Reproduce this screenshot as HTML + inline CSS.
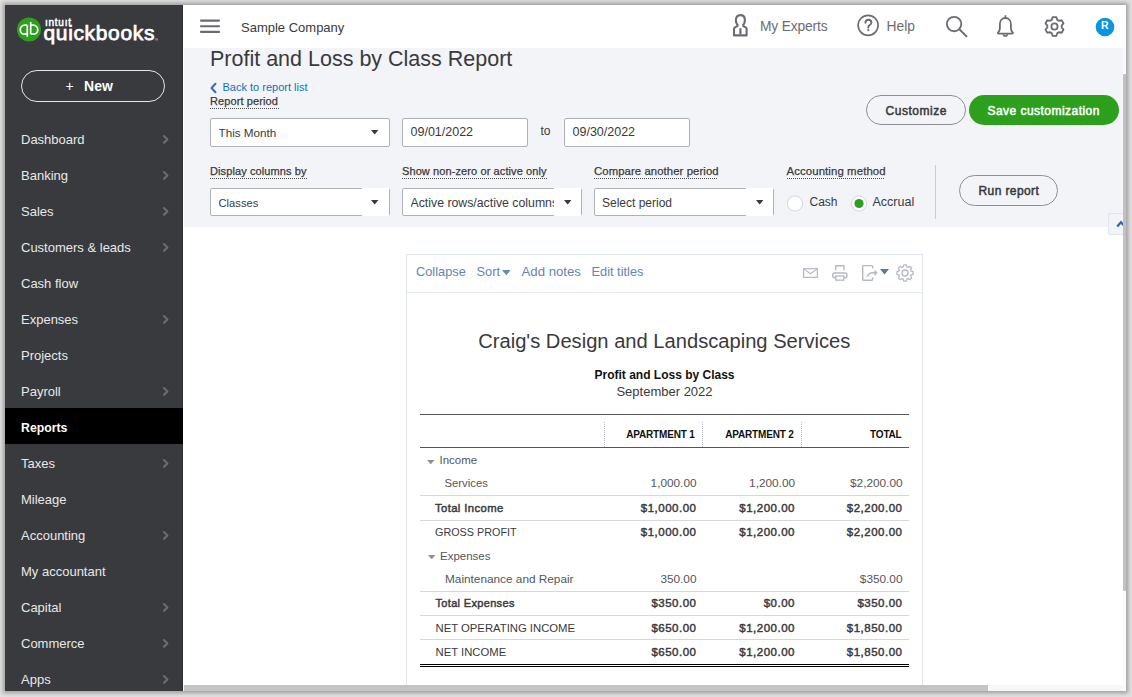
<!DOCTYPE html>
<html><head><meta charset="utf-8">
<style>
*{box-sizing:border-box;margin:0;padding:0}
html,body{width:1132px;height:697px;overflow:hidden;background:#e0e0e0;font-family:"Liberation Sans",sans-serif;position:relative}
.a{position:absolute;white-space:nowrap}
svg.a{overflow:visible}
</style></head><body>

<div class="a" style="left:5px;top:5px;width:1121px;height:686px;background:#fff;box-shadow:0 0 4px 2px rgba(0,0,0,.3)"></div>
<div class="a" style="left:5px;top:5px;width:178px;height:686px;background:#393a3d"></div>
<div class="a" style="left:182px;top:5px;width:1px;height:686px;background:#2f3033"></div>
<svg class="a" style="left:16px;top:17px" width="26" height="25" viewBox="0 0 26 25"><circle cx="13" cy="12.6" r="12" fill="#2ca01c"/><path d="M11.3 8.2H8.7A4.45 4.45 0 0 0 8.7 17.1H11.3M11.3 8.2V19.7M14.7 17.1H17.3A4.45 4.45 0 0 0 17.3 8.2H14.7M14.7 5V17.1" stroke="#fff" stroke-width="1.7" fill="none"/></svg>
<div class="a" style="left:45px;top:17.84px;font-size:10px;line-height:10px;color:#fff;letter-spacing:0.75px;-webkit-text-stroke:0.5px #fff">&#305;ntu&#305;t</div>
<div class="a" style="left:43.5px;top:22.42px;font-size:21px;line-height:21px;color:#fff;letter-spacing:0.65px;-webkit-text-stroke:0.75px #fff">quickbooks</div>
<div class="a" style="left:155px;top:37px;font-size:4px;color:#fff">&reg;</div>
<div class="a" style="left:21px;top:70px;width:144px;height:32px;border:1.3px solid #e6e6e6;border-radius:16px"></div>
<div class="a" style="left:65.5px;top:79.15px;font-size:14px;line-height:14px;color:#fff;">+</div>
<div class="a" style="left:84px;top:79.15px;font-size:14px;line-height:14px;color:#fff;font-weight:bold;letter-spacing:0.1px">New</div>
<div class="a" style="left:21px;top:133.00px;font-size:13px;line-height:13px;color:#e8e8e8;">Dashboard</div>
<svg class="a" style="left:161.5px;top:134px" width="7" height="11" viewBox="0 0 7 11"><path d="M2 2L5.4 5.4L2 8.8" stroke="#6b6c72" stroke-width="2.1" fill="none" stroke-linecap="round" stroke-linejoin="round"/></svg>
<div class="a" style="left:21px;top:169.00px;font-size:13px;line-height:13px;color:#e8e8e8;">Banking</div>
<svg class="a" style="left:161.5px;top:170px" width="7" height="11" viewBox="0 0 7 11"><path d="M2 2L5.4 5.4L2 8.8" stroke="#6b6c72" stroke-width="2.1" fill="none" stroke-linecap="round" stroke-linejoin="round"/></svg>
<div class="a" style="left:21px;top:205.00px;font-size:13px;line-height:13px;color:#e8e8e8;">Sales</div>
<svg class="a" style="left:161.5px;top:206px" width="7" height="11" viewBox="0 0 7 11"><path d="M2 2L5.4 5.4L2 8.8" stroke="#6b6c72" stroke-width="2.1" fill="none" stroke-linecap="round" stroke-linejoin="round"/></svg>
<div class="a" style="left:21px;top:241.00px;font-size:13px;line-height:13px;color:#e8e8e8;">Customers &amp; leads</div>
<svg class="a" style="left:161.5px;top:242px" width="7" height="11" viewBox="0 0 7 11"><path d="M2 2L5.4 5.4L2 8.8" stroke="#6b6c72" stroke-width="2.1" fill="none" stroke-linecap="round" stroke-linejoin="round"/></svg>
<div class="a" style="left:21px;top:277.00px;font-size:13px;line-height:13px;color:#e8e8e8;">Cash flow</div>
<div class="a" style="left:21px;top:313.00px;font-size:13px;line-height:13px;color:#e8e8e8;">Expenses</div>
<svg class="a" style="left:161.5px;top:314px" width="7" height="11" viewBox="0 0 7 11"><path d="M2 2L5.4 5.4L2 8.8" stroke="#6b6c72" stroke-width="2.1" fill="none" stroke-linecap="round" stroke-linejoin="round"/></svg>
<div class="a" style="left:21px;top:349.00px;font-size:13px;line-height:13px;color:#e8e8e8;">Projects</div>
<div class="a" style="left:21px;top:385.00px;font-size:13px;line-height:13px;color:#e8e8e8;">Payroll</div>
<svg class="a" style="left:161.5px;top:386px" width="7" height="11" viewBox="0 0 7 11"><path d="M2 2L5.4 5.4L2 8.8" stroke="#6b6c72" stroke-width="2.1" fill="none" stroke-linecap="round" stroke-linejoin="round"/></svg>
<div class="a" style="left:5px;top:408px;width:178px;height:36px;background:#000"></div>
<div class="a" style="left:21px;top:421.59px;font-size:12.3px;line-height:12.3px;color:#fff;font-weight:bold;">Reports</div>
<div class="a" style="left:21px;top:457.00px;font-size:13px;line-height:13px;color:#e8e8e8;">Taxes</div>
<svg class="a" style="left:161.5px;top:458px" width="7" height="11" viewBox="0 0 7 11"><path d="M2 2L5.4 5.4L2 8.8" stroke="#6b6c72" stroke-width="2.1" fill="none" stroke-linecap="round" stroke-linejoin="round"/></svg>
<div class="a" style="left:21px;top:493.00px;font-size:13px;line-height:13px;color:#e8e8e8;">Mileage</div>
<div class="a" style="left:21px;top:529.00px;font-size:13px;line-height:13px;color:#e8e8e8;">Accounting</div>
<svg class="a" style="left:161.5px;top:530px" width="7" height="11" viewBox="0 0 7 11"><path d="M2 2L5.4 5.4L2 8.8" stroke="#6b6c72" stroke-width="2.1" fill="none" stroke-linecap="round" stroke-linejoin="round"/></svg>
<div class="a" style="left:21px;top:565.00px;font-size:13px;line-height:13px;color:#e8e8e8;">My accountant</div>
<div class="a" style="left:21px;top:601.00px;font-size:13px;line-height:13px;color:#e8e8e8;">Capital</div>
<svg class="a" style="left:161.5px;top:602px" width="7" height="11" viewBox="0 0 7 11"><path d="M2 2L5.4 5.4L2 8.8" stroke="#6b6c72" stroke-width="2.1" fill="none" stroke-linecap="round" stroke-linejoin="round"/></svg>
<div class="a" style="left:21px;top:637.00px;font-size:13px;line-height:13px;color:#e8e8e8;">Commerce</div>
<svg class="a" style="left:161.5px;top:638px" width="7" height="11" viewBox="0 0 7 11"><path d="M2 2L5.4 5.4L2 8.8" stroke="#6b6c72" stroke-width="2.1" fill="none" stroke-linecap="round" stroke-linejoin="round"/></svg>
<div class="a" style="left:21px;top:673.00px;font-size:13px;line-height:13px;color:#e8e8e8;">Apps</div>
<svg class="a" style="left:161.5px;top:674px" width="7" height="11" viewBox="0 0 7 11"><path d="M2 2L5.4 5.4L2 8.8" stroke="#6b6c72" stroke-width="2.1" fill="none" stroke-linecap="round" stroke-linejoin="round"/></svg>
<div class="a" style="left:183px;top:5px;width:943px;height:43px;background:#fff"></div>
<svg class="a" style="left:200px;top:19px" width="20" height="14" viewBox="0 0 20 14"><path d="M1 1.6h18M1 7.3h18M1 12.9h18" stroke="#6b6c72" stroke-width="2.1" stroke-linecap="round"/></svg>
<div class="a" style="left:241px;top:21.30px;font-size:13px;line-height:13px;color:#393a3d;">Sample Company</div>
<svg class="a" style="left:728px;top:11px" width="24" height="29" viewBox="0 0 24 29"><path d="M10.3 14.6C8.7 13.4 7.9 11.5 7.9 9C7.9 5.8 9.8 4.1 12.4 4.1C15 4.1 16.9 5.8 16.9 9C16.9 11.5 16.1 13.4 14.5 14.6M10.3 14.6L7 16.4C6.3 16.8 6 17.4 6 18.1V24.4H18.6V18.1C18.6 17.4 18.3 16.8 17.6 16.4L14.5 14.6" stroke="#6b6c72" stroke-width="2.1" fill="none" stroke-linejoin="round"/><path d="M12.4 17.2V23.5" stroke="#6b6c72" stroke-width="2.2"/></svg>
<div class="a" style="left:760px;top:19.92px;font-size:13.8px;line-height:13.8px;color:#6b6c72;letter-spacing:-0.15px">My Experts</div>
<svg class="a" style="left:856px;top:14px" width="24" height="23" viewBox="0 0 24 23"><circle cx="12.1" cy="11.3" r="10" stroke="#6b6c72" stroke-width="1.7" fill="none"/></svg>
<svg class="a" style="left:856px;top:14px" width="24" height="23" viewBox="0 0 24 23"><path d="M9.4 8.7C9.6 6.8 10.8 5.8 12.4 5.8C14.1 5.8 15.4 6.9 15.4 8.6C15.4 10.3 13.9 10.9 12.9 11.7C12.4 12.1 12.3 12.6 12.3 13.6" stroke="#6b6c72" stroke-width="1.9" fill="none" stroke-linecap="round"/><circle cx="12.3" cy="16.1" r="1.15" fill="#6b6c72"/></svg>
<div class="a" style="left:886.5px;top:20.32px;font-size:13.8px;line-height:13.8px;color:#6b6c72;">Help</div>
<svg class="a" style="left:944px;top:14px" width="26" height="25" viewBox="0 0 26 25"><circle cx="10.1" cy="10" r="7.2" stroke="#6b6c72" stroke-width="1.85" fill="none"/><path d="M15.5 15.4l7 7" stroke="#6b6c72" stroke-width="2" stroke-linecap="round"/></svg>
<svg class="a" style="left:995px;top:14px" width="22" height="25" viewBox="0 0 22 25"><path d="M10.4 1.2V4" stroke="#6b6c72" stroke-width="1.7"/><path d="M10.4 4C7 4 4.9 6.8 4.9 10V14C4.9 15.8 4.2 17.3 3.2 18.3C2.6 18.9 2.6 19.6 3.6 19.6H17.2C18.2 19.6 18.2 18.9 17.6 18.3C16.6 17.3 15.9 15.8 15.9 14V10C15.9 6.8 13.8 4 10.4 4Z" stroke="#6b6c72" stroke-width="1.8" fill="none" stroke-linejoin="round"/><path d="M8.5 20.2A1.9 1.9 0 0 0 12.3 20.2" stroke="#6b6c72" stroke-width="1.5" fill="none"/></svg>
<svg class="a" style="left:1043px;top:15px" width="23" height="23" viewBox="0 0 23 23"><path d="M8.69 4.87 L9.69 2.17 L13.31 2.17 L14.31 4.87 L15.83 5.75 L18.67 5.27 L20.48 8.41 L18.65 10.62 L18.65 12.38 L20.48 14.59 L18.67 17.73 L15.83 17.25 L14.31 18.13 L13.31 20.83 L9.69 20.83 L8.69 18.13 L7.17 17.25 L4.33 17.73 L2.52 14.59 L4.35 12.38 L4.35 10.62 L2.52 8.41 L4.33 5.27 L7.17 5.75Z" stroke="#6b6c72" stroke-width="1.8" fill="none" stroke-linejoin="round"/><circle cx="11.5" cy="11.5" r="3.1" stroke="#6b6c72" stroke-width="1.8" fill="none"/></svg>
<svg class="a" style="left:1095px;top:17px" width="20" height="20" viewBox="0 0 20 20"><circle cx="10" cy="10" r="9.3" fill="#0d94e0"/></svg>
<div class="a" style="left:1101px;top:20.41px;font-size:10.5px;line-height:10.5px;color:#fff;font-weight:bold;">R</div>
<div class="a" style="left:184px;top:48px;width:939px;height:179px;background:#f3f4f7"></div>
<div class="a" style="left:210px;top:49.00px;font-size:21.5px;line-height:21.5px;color:#393a3d;">Profit and Loss by Class Report</div>
<svg class="a" style="left:209px;top:82px" width="9" height="12" viewBox="0 0 9 12"><path d="M6.5 1.8L2.5 6l4 4.2" stroke="#3c69b6" stroke-width="2" fill="none" stroke-linecap="round" stroke-linejoin="round"/></svg>
<div class="a" style="left:222.5px;top:82.29px;font-size:11px;line-height:11px;color:#0c73c4;">Back to report list</div>
<div class="a" style="left:210px;top:95.59px;font-size:11px;line-height:11px;color:#393a3d;letter-spacing:0.1px;-webkit-text-stroke:0.25px #393a3d">Report period</div>
<div class="a" style="left:210px;top:107.9px;width:69px;height:1px;background-image:linear-gradient(90deg,#393a3d 50%,transparent 50%);background-size:2px 1px;opacity:.9"></div>
<div class="a" style="left:210px;top:118px;width:180px;height:29px;background:#fff;border:1px solid #adb1b8;border-radius:2px"></div>
<div class="a" style="left:218.5px;top:127.40px;font-size:11.7px;line-height:11.7px;color:#393a3d;overflow:hidden">This Month</div>
<svg class="a" style="left:371px;top:130px" width="8" height="5" viewBox="0 0 8 5"><path d="M0 0h7.4L3.7 4.6z" fill="#393a3d"/></svg>
<div class="a" style="left:402px;top:118px;width:126px;height:29px;background:#fff;border:1px solid #adb1b8;border-radius:2px"></div>
<div class="a" style="left:410.5px;top:126.22px;font-size:12.5px;line-height:12.5px;color:#393a3d;overflow:hidden">09/01/2022</div>
<div class="a" style="left:540.5px;top:125.24px;font-size:12px;line-height:12px;color:#393a3d;">to</div>
<div class="a" style="left:564px;top:118px;width:126px;height:29px;background:#fff;border:1px solid #adb1b8;border-radius:2px"></div>
<div class="a" style="left:572.5px;top:126.22px;font-size:12.5px;line-height:12.5px;color:#393a3d;overflow:hidden">09/30/2022</div>
<div class="a" style="left:866px;top:95px;width:100px;height:30px;border:1px solid #8d9096;border-radius:15px"></div>
<div class="a" style="left:885.5px;top:104.84px;font-size:12px;line-height:12px;color:#393a3d;letter-spacing:0.52px;-webkit-text-stroke:0.5px #393a3d">Customize</div>
<div class="a" style="left:969px;top:95px;width:150px;height:30px;background:#2ca01c;border-radius:15px"></div>
<div class="a" style="left:987.5px;top:104.84px;font-size:12px;line-height:12px;color:#fff;letter-spacing:0.46px;-webkit-text-stroke:0.5px #fff">Save customization</div>
<div class="a" style="left:210px;top:165.89px;font-size:11px;line-height:11px;color:#393a3d;letter-spacing:0.1px;-webkit-text-stroke:0.25px #393a3d">Display columns by</div>
<div class="a" style="left:210px;top:178.2px;width:97px;height:1px;background-image:linear-gradient(90deg,#393a3d 50%,transparent 50%);background-size:2px 1px;opacity:.9"></div>
<div class="a" style="left:402px;top:165.89px;font-size:11px;line-height:11px;color:#393a3d;letter-spacing:0.1px;-webkit-text-stroke:0.25px #393a3d">Show non-zero or active only</div>
<div class="a" style="left:402px;top:178.2px;width:145px;height:1px;background-image:linear-gradient(90deg,#393a3d 50%,transparent 50%);background-size:2px 1px;opacity:.9"></div>
<div class="a" style="left:594px;top:165.63px;font-size:11.3px;line-height:11.3px;color:#393a3d;letter-spacing:0.1px;-webkit-text-stroke:0.25px #393a3d">Compare another period</div>
<div class="a" style="left:594px;top:178.2px;width:124px;height:1px;background-image:linear-gradient(90deg,#393a3d 50%,transparent 50%);background-size:2px 1px;opacity:.9"></div>
<div class="a" style="left:786.5px;top:165.55px;font-size:11.4px;line-height:11.4px;color:#393a3d;letter-spacing:0.1px;-webkit-text-stroke:0.25px #393a3d">Accounting method</div>
<div class="a" style="left:786.5px;top:178.2px;width:98.5px;height:1px;background-image:linear-gradient(90deg,#393a3d 50%,transparent 50%);background-size:2px 1px;opacity:.9"></div>
<div class="a" style="left:210px;top:188px;width:180px;height:28px;background:#fff;border:1px solid #adb1b8;border-radius:2px"></div>
<div class="a" style="left:218.5px;top:198.12px;font-size:11.2px;line-height:11.2px;color:#393a3d;overflow:hidden;width:143.5px">Classes</div>
<div class="a" style="left:362px;top:188px;width:27px;height:28px;background:#fff"></div>
<svg class="a" style="left:371px;top:200px" width="8" height="5" viewBox="0 0 8 5"><path d="M0 0h7.4L3.7 4.6z" fill="#393a3d"/></svg>
<div class="a" style="left:402px;top:188px;width:180px;height:28px;background:#fff;border:1px solid #adb1b8;border-radius:2px"></div>
<div class="a" style="left:410.5px;top:197.19px;font-size:12.3px;line-height:12.3px;color:#393a3d;overflow:hidden;width:143.5px">Active rows/active columns</div>
<div class="a" style="left:554px;top:188px;width:27px;height:28px;background:#fff"></div>
<svg class="a" style="left:563.5px;top:200px" width="8" height="5" viewBox="0 0 8 5"><path d="M0 0h7.4L3.7 4.6z" fill="#393a3d"/></svg>
<div class="a" style="left:594px;top:188px;width:180px;height:28px;background:#fff;border:1px solid #adb1b8;border-radius:2px"></div>
<div class="a" style="left:602px;top:197.44px;font-size:12px;line-height:12px;color:#393a3d;overflow:hidden;width:144px">Select period</div>
<div class="a" style="left:746px;top:188px;width:27px;height:28px;background:#fff"></div>
<svg class="a" style="left:755.5px;top:200px" width="8" height="5" viewBox="0 0 8 5"><path d="M0 0h7.4L3.7 4.6z" fill="#393a3d"/></svg>
<svg class="a" style="left:786px;top:194.7px" width="18" height="18" viewBox="0 0 18 18"><circle cx="9" cy="8.5" r="7.6" fill="#fff" stroke="#d4d7dc" stroke-width="1"/></svg>
<div class="a" style="left:809.5px;top:196.24px;font-size:12px;line-height:12px;color:#393a3d;">Cash</div>
<svg class="a" style="left:850px;top:194.7px" width="18" height="18" viewBox="0 0 18 18"><circle cx="9" cy="8.5" r="7.6" fill="#fff" stroke="#d4d7dc" stroke-width="1"/><circle cx="9" cy="8.5" r="4.6" fill="#2ca01c"/></svg>
<div class="a" style="left:872.5px;top:195.82px;font-size:12.5px;line-height:12.5px;color:#393a3d;">Accrual</div>
<div class="a" style="left:935px;top:165px;width:1px;height:54px;background:#c9ccd1"></div>
<div class="a" style="left:959px;top:175px;width:99px;height:31px;border:1px solid #8d9096;border-radius:15.5px"></div>
<div class="a" style="left:978.5px;top:184.74px;font-size:12px;line-height:12px;color:#393a3d;letter-spacing:0.4px;-webkit-text-stroke:0.5px #393a3d">Run report</div>
<div class="a" style="left:1108px;top:213px;width:18px;height:22px;border:1px solid #dfe5ee;border-right:none;border-radius:2px 0 0 2px;background:#f3f4f7"></div>
<svg class="a" style="left:1115.5px;top:220px" width="10" height="8" viewBox="0 0 10 8"><path d="M1.2 6.6L5 2.2l3.8 4.4" stroke="#3c64b4" stroke-width="2.3" fill="none"/></svg>
<div class="a" style="left:406px;top:254px;width:517px;height:437px;border:1px solid #e1e6ed;border-bottom:none;background:#fff"></div>
<div class="a" style="left:407px;top:292px;width:515px;height:1px;background:#e3e6eb"></div>
<div class="a" style="left:416px;top:265.56px;font-size:12.8px;line-height:12.8px;color:#6585b0;">Collapse</div>
<div class="a" style="left:476.5px;top:265.56px;font-size:12.8px;line-height:12.8px;color:#6585b0;">Sort</div>
<svg class="a" style="left:502.3px;top:269.6px" width="9" height="6" viewBox="0 0 9 6"><path d="M0 0h8.7L4.35 5.2z" fill="#6b8ab0"/></svg>
<div class="a" style="left:521.5px;top:265.23px;font-size:13.2px;line-height:13.2px;color:#6585b0;">Add notes</div>
<div class="a" style="left:591.5px;top:265.56px;font-size:12.8px;line-height:12.8px;color:#6585b0;">Edit titles</div>
<svg class="a" style="left:798px;top:260px" width="54" height="25" viewBox="0 0 54 25"><rect x="5.6" y="8.7" width="13.8" height="8.7" stroke="#b5b9c0" stroke-width="1.25" fill="none"/><path d="M6 9.1L12.5 13.8 19 9.1" stroke="#b5b9c0" stroke-width="1.15" fill="none"/><path d="M37.8 10.2V5.7H45.9V10.2" stroke="#b5b9c0" stroke-width="1.4" fill="none"/><rect x="34.85" y="12.95" width="14" height="4.9" rx="1.6" stroke="#b5b9c0" stroke-width="1.5" fill="none"/><rect x="37.85" y="15.95" width="8" height="4.2" stroke="#b5b9c0" stroke-width="1.3" fill="#fff"/></svg>
<svg class="a" style="left:858px;top:260px" width="20" height="25" viewBox="0 0 20 25"><path d="M14.7 8.4V6.6C14.7 5.9 14.2 5.6 13.6 5.6H5.1C4.5 5.6 4.7 5.9 4.7 6.6V19.4C4.7 20 4.9 20.2 5.5 20.2H13.6C14.2 20.2 14.7 19.9 14.7 19.3V17.6" stroke="#b5b9c0" stroke-width="1.45" fill="none"/><path d="M9.2 16.6C10.2 14.2 12.2 12.8 15 12.8H18.4M16.4 10.6L18.6 12.8 16.4 15" stroke="#b5b9c0" stroke-width="1.45" fill="none"/></svg>
<svg class="a" style="left:880px;top:268.5px" width="10" height="6" viewBox="0 0 10 6"><path d="M0 0h9L4.5 5.5z" fill="#5f7898"/></svg>
<svg class="a" style="left:896px;top:263.5px" width="18" height="18" viewBox="0 0 18 18"><path d="M7.21 2.96 L7.72 0.90 L10.28 0.90 L10.79 2.96 L12.01 3.46 L13.82 2.37 L15.63 4.18 L14.54 5.99 L15.04 7.21 L17.10 7.72 L17.10 10.28 L15.04 10.79 L14.54 12.01 L15.63 13.82 L13.82 15.63 L12.01 14.54 L10.79 15.04 L10.28 17.10 L7.72 17.10 L7.21 15.04 L5.99 14.54 L4.18 15.63 L2.37 13.82 L3.46 12.01 L2.96 10.79 L0.90 10.28 L0.90 7.72 L2.96 7.21 L3.46 5.99 L2.37 4.18 L4.18 2.37 L5.99 3.46Z" stroke="#b5b9c0" stroke-width="1.3" fill="none" stroke-linejoin="round"/><circle cx="9" cy="9" r="3" stroke="#b5b9c0" stroke-width="1.4" fill="none"/></svg>
<div class="a" style="left:414.29999999999995px;width:500px;text-align:center;top:331.04px;font-size:20.15px;line-height:20.15px;color:#393a3d;">Craig's Design and Landscaping Services</div>
<div class="a" style="left:514.5px;width:300px;text-align:center;top:369.24px;font-size:12px;line-height:12px;color:#111;font-weight:bold;">Profit and Loss by Class</div>
<div class="a" style="left:514.5px;width:300px;text-align:center;top:384.60px;font-size:13px;line-height:13px;color:#393a3d;">September 2022</div>
<div class="a" style="left:420px;top:414px;width:489px;height:1px;background:#555"></div>
<div class="a" style="left:420px;top:447px;width:489px;height:1px;background:#555"></div>
<div class="a" style="left:604px;top:422px;width:1px;height:25px;background-image:linear-gradient(180deg,#b9bcc2 50%,transparent 50%);background-size:1px 2px"></div>
<div class="a" style="left:702px;top:422px;width:1px;height:25px;background-image:linear-gradient(180deg,#b9bcc2 50%,transparent 50%);background-size:1px 2px"></div>
<div class="a" style="left:801px;top:422px;width:1px;height:25px;background-image:linear-gradient(180deg,#b9bcc2 50%,transparent 50%);background-size:1px 2px"></div>
<div class="a" style="left:599.5px;width:95px;text-align:right;top:430.34px;font-size:10px;line-height:10px;color:#111;font-weight:bold;letter-spacing:-0.2px">APARTMENT 1</div>
<div class="a" style="left:698.5px;width:95px;text-align:right;top:430.34px;font-size:10px;line-height:10px;color:#111;font-weight:bold;letter-spacing:-0.2px">APARTMENT 2</div>
<div class="a" style="left:806.5px;width:95px;text-align:right;top:430.34px;font-size:10px;line-height:10px;color:#111;font-weight:bold;letter-spacing:-0.2px">TOTAL</div>
<svg class="a" style="left:427px;top:460px" width="8" height="5" viewBox="0 0 8 5"><path d="M0 0h7.5L3.75 4.2z" fill="#8d9096"/></svg>
<div class="a" style="left:439.5px;top:455.27px;font-size:11.5px;line-height:11.5px;color:#55565b;">Income</div>
<div class="a" style="left:444.5px;top:478.23px;font-size:11.3px;line-height:11.3px;color:#55565b;">Services</div>
<div class="a" style="left:616.5px;width:80px;text-align:right;top:477.81px;font-size:11.8px;line-height:11.8px;color:#55565b;">1,000.00</div>
<div class="a" style="left:715px;width:80px;text-align:right;top:477.81px;font-size:11.8px;line-height:11.8px;color:#55565b;">1,200.00</div>
<div class="a" style="left:822.5px;width:80px;text-align:right;top:477.81px;font-size:11.8px;line-height:11.8px;color:#55565b;">$2,200.00</div>
<div class="a" style="left:420px;top:495px;width:489px;height:1px;background:#d4d7dc"></div>
<div class="a" style="left:435px;top:502.93px;font-size:11.3px;line-height:11.3px;color:#393a3d;letter-spacing:0.38px;-webkit-text-stroke:0.45px #393a3d">Total Income</div>
<div class="a" style="left:616.5px;width:80px;text-align:right;top:502.77px;font-size:11.5px;line-height:11.5px;color:#393a3d;letter-spacing:0.5px;-webkit-text-stroke:0.45px #393a3d">$1,000.00</div>
<div class="a" style="left:715px;width:80px;text-align:right;top:502.77px;font-size:11.5px;line-height:11.5px;color:#393a3d;letter-spacing:0.5px;-webkit-text-stroke:0.45px #393a3d">$1,200.00</div>
<div class="a" style="left:822.5px;width:80px;text-align:right;top:502.77px;font-size:11.5px;line-height:11.5px;color:#393a3d;letter-spacing:0.5px;-webkit-text-stroke:0.45px #393a3d">$2,200.00</div>
<div class="a" style="left:420px;top:520px;width:489px;height:1px;background:#d4d7dc"></div>
<div class="a" style="left:435px;top:527.06px;font-size:10.8px;line-height:10.8px;color:#393a3d;">GROSS PROFIT</div>
<div class="a" style="left:616.5px;width:80px;text-align:right;top:527.07px;font-size:11.5px;line-height:11.5px;color:#393a3d;letter-spacing:0.5px;-webkit-text-stroke:0.45px #393a3d">$1,000.00</div>
<div class="a" style="left:715px;width:80px;text-align:right;top:527.07px;font-size:11.5px;line-height:11.5px;color:#393a3d;letter-spacing:0.5px;-webkit-text-stroke:0.45px #393a3d">$1,200.00</div>
<div class="a" style="left:822.5px;width:80px;text-align:right;top:527.07px;font-size:11.5px;line-height:11.5px;color:#393a3d;letter-spacing:0.5px;-webkit-text-stroke:0.45px #393a3d">$2,200.00</div>
<svg class="a" style="left:427.5px;top:555px" width="8" height="5" viewBox="0 0 8 5"><path d="M0 0h7.5L3.75 4.2z" fill="#8d9096"/></svg>
<div class="a" style="left:440px;top:550.77px;font-size:11.5px;line-height:11.5px;color:#55565b;">Expenses</div>
<div class="a" style="left:445px;top:574.21px;font-size:11.8px;line-height:11.8px;color:#55565b;">Maintenance and Repair</div>
<div class="a" style="left:616.5px;width:80px;text-align:right;top:574.21px;font-size:11.8px;line-height:11.8px;color:#55565b;">350.00</div>
<div class="a" style="left:822.5px;width:80px;text-align:right;top:574.21px;font-size:11.8px;line-height:11.8px;color:#55565b;">$350.00</div>
<div class="a" style="left:420px;top:591px;width:489px;height:1px;background:#d4d7dc"></div>
<div class="a" style="left:435.5px;top:597.59px;font-size:11px;line-height:11px;color:#393a3d;letter-spacing:0.33px;-webkit-text-stroke:0.45px #393a3d">Total Expenses</div>
<div class="a" style="left:616.5px;width:80px;text-align:right;top:598.17px;font-size:11.5px;line-height:11.5px;color:#393a3d;letter-spacing:0.5px;-webkit-text-stroke:0.45px #393a3d">$350.00</div>
<div class="a" style="left:715px;width:80px;text-align:right;top:598.17px;font-size:11.5px;line-height:11.5px;color:#393a3d;letter-spacing:0.5px;-webkit-text-stroke:0.45px #393a3d">$0.00</div>
<div class="a" style="left:822.5px;width:80px;text-align:right;top:598.17px;font-size:11.5px;line-height:11.5px;color:#393a3d;letter-spacing:0.5px;-webkit-text-stroke:0.45px #393a3d">$350.00</div>
<div class="a" style="left:420px;top:615px;width:489px;height:1px;background:#d4d7dc"></div>
<div class="a" style="left:435.5px;top:623.43px;font-size:11.3px;line-height:11.3px;color:#393a3d;">NET OPERATING INCOME</div>
<div class="a" style="left:616.5px;width:80px;text-align:right;top:623.27px;font-size:11.5px;line-height:11.5px;color:#393a3d;letter-spacing:0.5px;-webkit-text-stroke:0.45px #393a3d">$650.00</div>
<div class="a" style="left:715px;width:80px;text-align:right;top:623.27px;font-size:11.5px;line-height:11.5px;color:#393a3d;letter-spacing:0.5px;-webkit-text-stroke:0.45px #393a3d">$1,200.00</div>
<div class="a" style="left:822.5px;width:80px;text-align:right;top:623.27px;font-size:11.5px;line-height:11.5px;color:#393a3d;letter-spacing:0.5px;-webkit-text-stroke:0.45px #393a3d">$1,850.00</div>
<div class="a" style="left:420px;top:639px;width:489px;height:1px;background:#d4d7dc"></div>
<div class="a" style="left:435.5px;top:647.43px;font-size:11.3px;line-height:11.3px;color:#393a3d;">NET INCOME</div>
<div class="a" style="left:616.5px;width:80px;text-align:right;top:647.27px;font-size:11.5px;line-height:11.5px;color:#393a3d;letter-spacing:0.5px;-webkit-text-stroke:0.45px #393a3d">$650.00</div>
<div class="a" style="left:715px;width:80px;text-align:right;top:647.27px;font-size:11.5px;line-height:11.5px;color:#393a3d;letter-spacing:0.5px;-webkit-text-stroke:0.45px #393a3d">$1,200.00</div>
<div class="a" style="left:822.5px;width:80px;text-align:right;top:647.27px;font-size:11.5px;line-height:11.5px;color:#393a3d;letter-spacing:0.5px;-webkit-text-stroke:0.45px #393a3d">$1,850.00</div>
<div class="a" style="left:420px;top:664px;width:489px;height:1px;background:#000"></div>
<div class="a" style="left:420px;top:666px;width:489px;height:1px;background:#000"></div>
<div class="a" style="left:183px;top:685px;width:940px;height:6px;background:#f7f7f7"></div>
<div class="a" style="left:184px;top:685px;width:804px;height:6px;background:#c3c3c3"></div>
<div class="a" style="left:1123px;top:48px;width:3px;height:643px;background:#fafafa"></div>
<div class="a" style="left:1123px;top:74px;width:3px;height:517px;background:#c1c1c1;border-radius:1px"></div>
</body></html>
